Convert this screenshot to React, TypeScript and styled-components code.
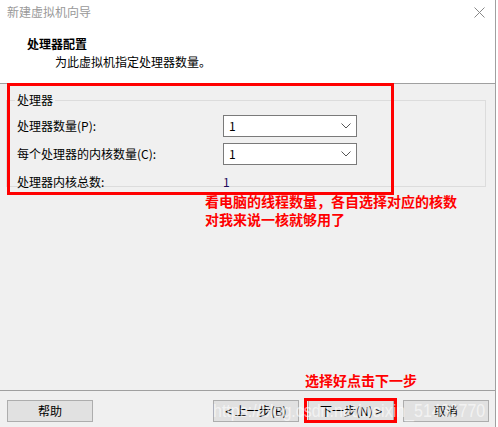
import React from "react";
import styled, { createGlobalStyle } from "styled-components";

const GlobalStyle = createGlobalStyle`
  html, body {
    margin: 0;
    padding: 0;
    background: #ffffff;
  }
  body {
    font-family: "Noto Sans CJK SC", "Microsoft YaHei", sans-serif;
    font-size: 12px;
    color: #000;
  }
`;

const Window = styled.div`
  position: relative;
  width: 495px;
  height: 427px;
  border-right: 1px solid #a0a0a0;
  background: #f0f0f0;
  display: flex;
  flex-direction: column;
  overflow: hidden;
`;

const Header = styled.div`
  height: 84px;
  background: #ffffff;
  border-bottom: 1px solid #a0a0a0;
  box-sizing: border-box;
  position: relative;
`;

const TitleText = styled.div`
  padding: 4px 0 0 7px;
  height: 16px;
  line-height: 16px;
  color: #999999;
`;

const CloseIcon = styled.svg`
  position: absolute;
  top: 7px;
  right: 10px;
`;

const Heading = styled.div`
  margin: 16px 0 0 27px;
  font-weight: bold;
  line-height: 16px;
`;

const SubTitle = styled.div`
  margin: 2px 0 0 55px;
  line-height: 16px;
`;

const Body = styled.div`
  flex: 1;
  padding: 9px 9px 0 6px;
`;

const Group = styled.fieldset`
  margin: 0;
  padding: 2px 10px 4px 10px;
  border: 1px solid #dcdcdc;
  height: 94px;
  box-sizing: border-box;
`;

const Legend = styled.legend`
  padding: 0 2px;
  margin-left: -2px;
  line-height: 14px;
`;

const FormGrid = styled.div`
  display: grid;
  grid-template-columns: 206px 134px;
  grid-auto-rows: 28px;
  align-items: center;
  margin-top: 3px;
`;

const Label = styled.span`
  line-height: 16px;
`;

const SelectBox = styled.div`
  height: 22px;
  box-sizing: border-box;
  border: 1px solid #7a7a7a;
  background: #ffffff;
  display: flex;
  align-items: center;
  justify-content: space-between;
  padding: 0 5px 0 5px;
`;

const ValueText = styled.span<{ $purple?: boolean }>`
  color: ${(p) => (p.$purple ? "#1c0a5a" : "#000")};
  line-height: 16px;
`;

const Annotation = styled.div`
  color: #ff0000;
  font-weight: bold;
  font-size: 14px;
  line-height: 18px;
`;

const AnnotationNote = styled(Annotation)`
  margin: 5px 0 0 199px;
`;

const Spacer = styled.div`
  flex: 1;
`;

const FooterNote = styled(Annotation)`
  padding-left: 305px;
  height: 19px;
  line-height: 18px;
`;

const Footer = styled.div`
  border-top: 1px solid #a0a0a0;
  height: 37px;
  padding: 9px 0 0 7px;
  box-sizing: border-box;
  display: flex;
  gap: 9px;
`;

const Button = styled.div<{ $push?: number }>`
  width: 86px;
  height: 22px;
  box-sizing: border-box;
  border: 1px solid #adadad;
  background: #e1e1e1;
  display: flex;
  align-items: center;
  justify-content: center;
  margin-left: ${(p) => p.$push ?? 0}px;
  line-height: 16px;
`;

const RedBox = styled.div`
  position: absolute;
  border: 3px solid #ff0000;
  box-sizing: border-box;
  pointer-events: none;
`;

const MainRedBox = styled(RedBox)`
  left: 7px;
  top: 83px;
  width: 387px;
  height: 112px;
`;

const ButtonRedBox = styled(RedBox)`
  left: 304px;
  top: 398px;
  width: 93px;
  height: 25px;
`;

const Watermark = styled.div`
  position: absolute;
  left: 213px;
  top: 400px;
  font-family: "Liberation Sans", Arial, sans-serif;
  font-size: 16px;
  line-height: 20px;
  color: rgba(255, 255, 255, 0.6);
  white-space: nowrap;
  transform: scaleY(1.15);
  transform-origin: left top;
  pointer-events: none;
`;

const Chevron = () => (
  <svg width="10" height="6" viewBox="0 0 10 6">
    <path d="M0.5 0.5 L5 5 L9.5 0.5" fill="none" stroke="#555" strokeWidth="1" />
  </svg>
);

const Select = ({ value }: { value: string }) => (
  <SelectBox>
    <ValueText>{value}</ValueText>
    <Chevron />
  </SelectBox>
);

export default function App() {
  return (
    <>
      <GlobalStyle />
      <Window>
        <Header>
          <TitleText>新建虚拟机向导</TitleText>
          <CloseIcon width="11" height="11" viewBox="0 0 11 11">
            <path d="M0.5 0.5 L10.5 10.5 M10.5 0.5 L0.5 10.5" stroke="#888" strokeWidth="1" />
          </CloseIcon>
          <Heading>处理器配置</Heading>
          <SubTitle>为此虚拟机指定处理器数量。</SubTitle>
        </Header>
        <Body>
          <Group>
            <Legend>处理器</Legend>
            <FormGrid>
              <Label>处理器数量(P):</Label>
              <Select value="1" />
              <Label>每个处理器的内核数量(C):</Label>
              <Select value="1" />
              <Label>处理器内核总数:</Label>
              <ValueText $purple>1</ValueText>
            </FormGrid>
          </Group>
          <AnnotationNote>
            看电脑的线程数量，各自选择对应的核数
            <br />
            对我来说一核就够用了
          </AnnotationNote>
        </Body>
        <Spacer />
        <FooterNote>选择好点击下一步</FooterNote>
        <Footer>
          <Button>帮助</Button>
          <Button $push={111}>&lt; 上一步(B)</Button>
          <Button>下一步(N) &gt;</Button>
          <Button>取消</Button>
        </Footer>
        <MainRedBox />
        <ButtonRedBox />
        <Watermark>https://blog.csdn.net/weixin_51432770</Watermark>
      </Window>
    </>
  );
}
